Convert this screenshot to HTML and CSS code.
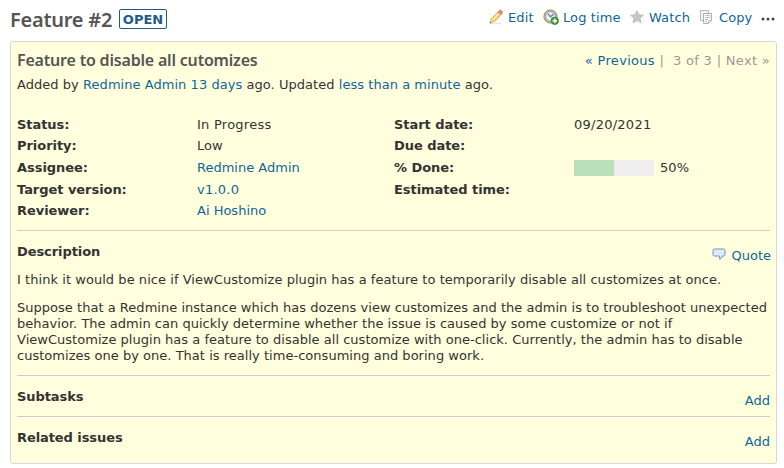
FILE: index.html
```html
<!DOCTYPE html>
<html lang="en">
<head>
<meta charset="utf-8">
<title>Feature #2</title>
<link rel="stylesheet" href="styles.css">
</head>
<body>
<header class="top">
  <h2>Feature #2</h2><span class="badge">OPEN</span>
  <nav class="actions">
    <a class="edit"><svg width="16" height="16" viewBox="0 0 16 16"><path d="M3 14.5h10" stroke="#e8e8e8" stroke-width="1.5"/><path d="M2 14l1.2-4.2 7-7 3 3-7 7z" fill="#f9d566" stroke="#d9a33c" stroke-width=".8"/><path d="M4.5 10.8l6.5-6.5" stroke="#fff0a8" stroke-width="1.3"/><path d="M9.8 3.2l1.8-1.9q.7-.6 1.4 0l1.3 1.3q.6.7 0 1.4l-1.8 1.9z" fill="#ed8678" stroke="#cf6558" stroke-width=".6"/><path d="M9.6 3.6l2.8 2.8" stroke="#c9ccd2" stroke-width="1.2"/><path d="M2 14l.9-3 2.1 2.1z" fill="#f4ddc0"/><path d="M1.6 14.4l.6-1.8 1.2 1.2z" fill="#555"/></svg><span>Edit</span></a>
    <a class="log"><svg width="16" height="16" viewBox="0 0 16 16"><circle cx="7.5" cy="7.5" r="6.6" fill="#dfc498" stroke="#a48b60"/><circle cx="7.5" cy="7.5" r="4.9" fill="#eaf3fc" stroke="#7e93aa"/><path d="M5 4.8l2.6 3L10.5 5" fill="none" stroke="#557da8" stroke-width="1.2"/><circle cx="11.8" cy="11.8" r="3.7" fill="#48a33d" stroke="#2f7d2b" stroke-width=".8"/><path d="M11.8 9.6v4.4M9.6 11.8H14" stroke="#fff" stroke-width="1.4"/></svg><span>Log time</span></a>
    <a class="watch"><svg width="16" height="16" viewBox="0 0 16 16"><path d="M8 1.7l1.8 4.1 4.6.4-3.4 3 1 4.6L8 11.4l-4 2.4 1-4.6-3.4-3 4.6-.4z" fill="#c6c6c6" stroke="#b4b4b4" stroke-width=".8" stroke-linejoin="round"/></svg><span>Watch</span></a>
    <a class="copy"><svg width="16" height="16" viewBox="0 0 16 16"><path d="M2.500 1.500h8v10h-8z" fill="#f4f4f4" stroke="#b8b8b8"/><path d="M5.500 4.500h8v7l-3 3h-5z" fill="#fafafa" stroke="#b0b0b0"/><path d="M10.500 14.500v-3h3M7 6.500h5M7 8.500h5M7 10.500h3M7 12.500h2" fill="none" stroke="#c2c2c2"/></svg><span>Copy</span></a>
    <a class="more"><svg width="14" height="4" viewBox="0 0 14 4"><g fill="#444"><circle cx="2" cy="2" r="1.5"/><circle cx="7" cy="2" r="1.5"/><circle cx="12" cy="2" r="1.5"/></g></svg></a>
  </nav>
</header>
<main class="issue">
  <div class="title"><h3>Feature to disable all cutomizes</h3><div class="pager"><a>« Previous</a> |&nbsp; <span class="count">3 of 3</span> | Next »</div></div>
  <p class="author">Added by <a>Redmine Admin</a> <a>13 days</a> ago. Updated <a>less than a minute</a> ago.</p>
  <div class="attributes">
    <dl>
      <dt>Status:</dt><dd class="spaced">In Progress</dd>
      <dt>Priority:</dt><dd>Low</dd>
      <dt>Assignee:</dt><dd><a>Redmine Admin</a></dd>
      <dt>Target version:</dt><dd class="spaced"><a>v1.0.0</a></dd>
      <dt>Reviewer:</dt><dd><a>Ai Hoshino</a></dd>
    </dl>
    <dl>
      <dt>Start date:</dt><dd class="spaced">09/20/2021</dd>
      <dt>Due date:</dt><dd></dd>
      <dt>% Done:</dt><dd class="done"><span class="progress"><span class="bar" style="width:50%"></span></span>50%</dd>
      <dt>Estimated time:</dt><dd></dd>
    </dl>
  </div>
  <section class="description">
    <div class="head"><h4>Description</h4><a class="quote"><svg width="14" height="13" viewBox="0 0 14 13"><path d="M2.500 1h9q1.500 0 1.500 1.500v4q0 1.500-1.500 1.500H10.200q0 2-2.400 3.200L7.500 8h-5Q1 8 1 6.500v-4Q1 1 2.500 1z" fill="#dcecfb" stroke="#6e93c0" stroke-linejoin="round"/></svg><span>Quote</span></a></div>
    <p class="lead">I think it would be nice if ViewCustomize plugin has a feature to temporarily disable all customizes at once.</p>
    <p>Suppose that a Redmine instance which has dozens view customizes and the admin is to troubleshoot unexpected<br>behavior. The admin can quickly determine whether the issue is caused by some customize or not if<br>ViewCustomize plugin has a feature to disable all customize with one-click. Currently, the admin has to disable<br>customizes one by one. That is really time-consuming and boring work.</p>
  </section>
  <section class="linked"><h4>Subtasks</h4><a>Add</a></section>
  <section class="linked"><h4>Related issues</h4><a>Add</a></section>
</main>
</body>
</html>
```
FILE: styles.css
```css
* { box-sizing: border-box; }
body { margin: 0; background: #fff; color: #333; font: 13px/16px Verdana, "DejaVu Sans", sans-serif; }
h2, h3, h4, p, dl, dd { margin: 0; }
a { color: #169; }
svg { display: block; flex: none; }
.top { display: flex; align-items: flex-start; height: 41px; padding: 9px 9px 0 10px; }
h2 { width: 109px; color: #555; font: 600 20px/21px "Trebuchet MS", "Noto Sans", sans-serif; letter-spacing: -.25px; white-space: nowrap; }
.badge { width: 48px; height: 20px; border: 1px solid #205d86; border-radius: 2px; color: #205d86; font-weight: bold; line-height: 19px; text-align: center; }
.actions { display: flex; margin-left: auto; }
.actions a { display: flex; gap: 4px; white-space: nowrap; }
.actions span { margin-top: 1px; letter-spacing: .1px; }
.edit { width: 55px; }
.log { width: 86px; }
.watch { width: 69px; }
.actions .copy { width: 63px; gap: 5px; }
.actions .more { width: 14px; padding-top: 8px; }
.issue { width: 767px; height: 423px; margin-left: 10px; padding: 0 6px; background: #ffffdd; border: 1px solid #d7d7d7; border-radius: 3px; }
.title { display: flex; justify-content: space-between; padding-top: 8px; }
h3 { color: #555; font: 600 16px/20px "Trebuchet MS", "Noto Sans", sans-serif; letter-spacing: -.19px; white-space: nowrap; }
.pager { padding-top: 3px; color: #999; letter-spacing: .31px; white-space: nowrap; }
.author { margin-top: 7px; letter-spacing: .045px; }
.attributes { display: grid; grid-template-columns: 377px 1fr; height: 137px; padding-top: 24px; }
dl { display: grid; grid-template-columns: 180px 1fr; grid-template-rows: 21px 22px 22px 21px 21px; align-content: start; }
dt { font-weight: bold; letter-spacing: -.05px; }
.spaced { letter-spacing: .25px; }
.done { display: flex; gap: 6px; letter-spacing: .1px; }
.progress { width: 80px; height: 16px; background: #eee; }
.bar { display: block; height: 100%; background: #bae0ba; }
.description { height: 145px; border-top: 1px solid #ccc; }
.head { display: flex; justify-content: space-between; height: 41px; padding-top: 13px; }
h4 { font-size: 13px; line-height: 16px; letter-spacing: -.08px; }
.quote { display: flex; gap: 5px; margin-top: 4px; margin-right: -1px; }
.description p { white-space: nowrap; letter-spacing: .025px; }
.description .lead { letter-spacing: .05px; }
.description p + p { margin-top: 12px; }
.linked { display: flex; justify-content: space-between; height: 41px; padding-top: 13px; border-top: 1px solid #ccc; }
.linked a { margin-top: 4px; }
```
